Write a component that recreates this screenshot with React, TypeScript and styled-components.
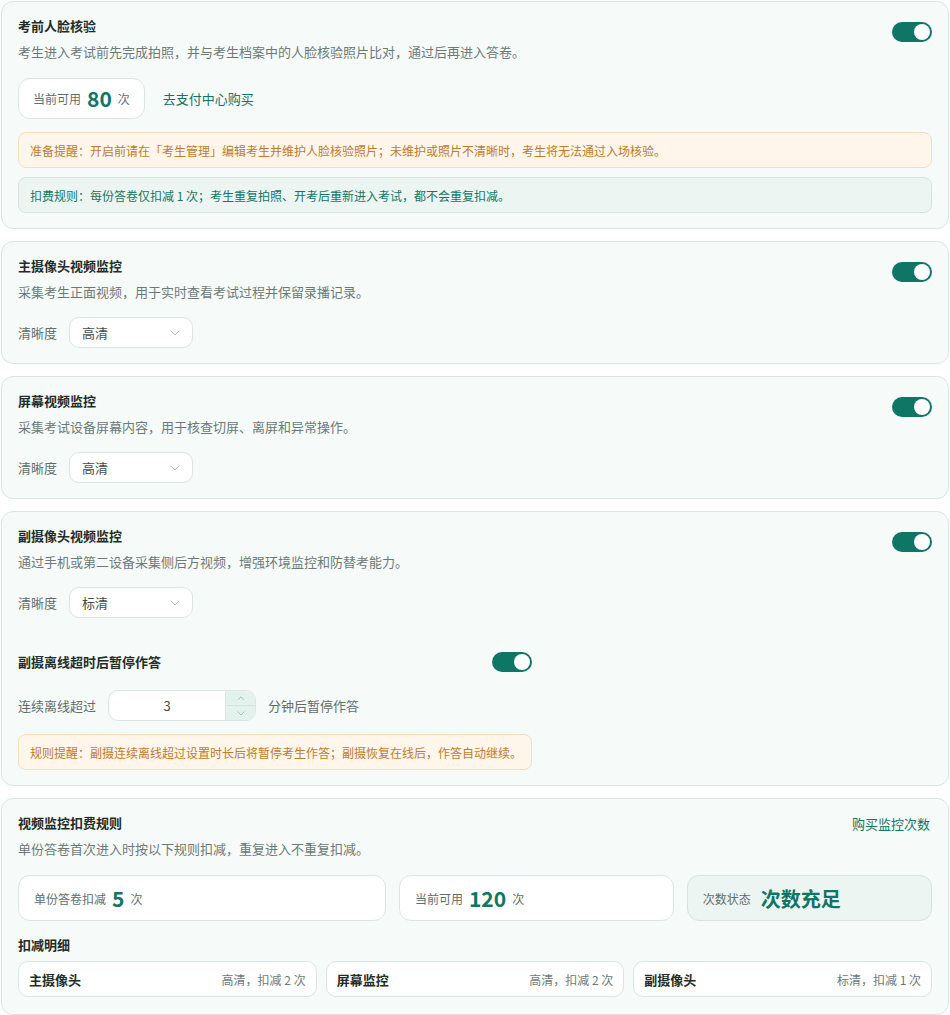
import React from "react"
import styled, { createGlobalStyle } from "styled-components"

const teal = "#0f7564"

const GlobalStyle = createGlobalStyle`
  body {
    margin: 0;
    background: #ffffff;
    font-family: "Noto Sans CJK SC", "Noto Sans", "Liberation Sans", sans-serif;
    color: #1f2d2a;
  }
  * { box-sizing: border-box; }
`

const Page = styled.div`
  display: flex;
  flex-direction: column;
  gap: 12px;
  padding: 1px 1px 0;
`

const Card = styled.section<{ $pb?: number }>`
  background: #f6faf9;
  border: 1px solid #d9e6e2;
  border-radius: 12px;
  padding: 14px 16px ${p => p.$pb ?? 15}px;
`

const Header = styled.div`
  display: flex;
  justify-content: space-between;
  align-items: flex-start;
`

const Title = styled.h3`
  margin: 0;
  font-size: 13px;
  line-height: 20px;
  font-weight: 700;
  color: #1f2d2a;
`

const Desc = styled.p`
  margin: 6px 0 0;
  font-size: 13px;
  line-height: 20px;
  color: #6b7a77;
`

const Toggle = styled.span<{ $offset?: number }>`
  display: inline-block;
  position: relative;
  width: 40px;
  height: 20px;
  border-radius: 10px;
  background: ${teal};
  margin-top: ${p => p.$offset ?? 6}px;
  flex-shrink: 0;
  &::after {
    content: "";
    position: absolute;
    top: 2px;
    right: 2px;
    width: 16px;
    height: 16px;
    border-radius: 50%;
    background: #ffffff;
  }
`

const Row = styled.div<{ $mt?: number; $gap?: number }>`
  display: flex;
  align-items: center;
  gap: ${p => p.$gap ?? 12}px;
  margin-top: ${p => p.$mt ?? 0}px;
`

const QuotaBox = styled.div`
  display: flex;
  align-items: center;
  gap: 6px;
  height: 41px;
  padding: 0 14px;
  background: #ffffff;
  border: 1px solid #d9e6e2;
  border-radius: 12px;
`

const SmallLabel = styled.span`
  font-size: 12px;
  color: #5f6e6b;
`

const BigNum = styled.span`
  font-size: 21px;
  font-weight: 700;
  color: ${teal};
  line-height: 1;
`

const LinkText = styled.a<{ $mr?: number }>`
  font-size: 13px;
  color: ${teal};
  text-decoration: none;
  cursor: pointer;
  margin-right: ${p => p.$mr ?? 0}px;
`

const Notice = styled.div<{ $tone: "warn" | "info"; $mt?: number }>`
  display: flex;
  align-items: center;
  height: 36px;
  padding: 0 11px;
  margin-top: ${p => p.$mt ?? 9}px;
  font-size: 12px;
  white-space: nowrap;
  border-radius: 8px;
  background: ${p => (p.$tone === "warn" ? "#fff6eb" : "#edf5f2")};
  border: 1px solid ${p => (p.$tone === "warn" ? "#f7ddbb" : "#d4e5df")};
  color: ${p => (p.$tone === "warn" ? "#c27a2b" : "#137564")};
`

const FieldLabel = styled.span`
  font-size: 13px;
  color: #5f6e6b;
`

const SelectBox = styled.div`
  display: flex;
  align-items: center;
  justify-content: space-between;
  width: 124px;
  height: 31px;
  padding: 0 12px;
  background: #ffffff;
  border: 1px solid #d9e6e2;
  border-radius: 10px;
  font-size: 13px;
  color: #3f4d4a;
`

const SubSection = styled.div`
  max-width: 514px;
  margin-top: 34px;
`

const SubRow = styled.div`
  display: flex;
  justify-content: space-between;
  align-items: center;
`

const NumberInput = styled.div`
  display: flex;
  width: 148px;
  height: 31px;
  background: #ffffff;
  border: 1px solid #d9e6e2;
  border-radius: 10px;
  overflow: hidden;
`

const NumberValue = styled.span`
  flex: 1;
  display: flex;
  align-items: center;
  justify-content: center;
  font-size: 13px;
  color: #3f4d4a;
`

const Stepper = styled.div`
  width: 30px;
  display: flex;
  flex-direction: column;
  border-left: 1px solid #d9e6e2;
  background: #e4f2ed;
`

const StepBtn = styled.span<{ $top?: boolean }>`
  flex: 1;
  display: flex;
  align-items: center;
  justify-content: center;
  border-bottom: ${p => (p.$top ? "1px solid #d4e5df" : "none")};
`

const TitleBar = styled.div`
  display: flex;
  justify-content: space-between;
  align-items: center;
`

const StatsGrid = styled.div`
  display: grid;
  grid-template-columns: 1.5fr 1.12fr 1fr;
  gap: 13px;
  margin-top: 16px;
`

const StatBox = styled.div<{ $accent?: boolean }>`
  display: flex;
  align-items: center;
  gap: 6px;
  height: 46px;
  padding: 0 15px;
  border-radius: 12px;
  background: ${p => (p.$accent ? "#edf5f2" : "#ffffff")};
  border: 1px solid ${p => (p.$accent ? "#d4e5df" : "#d9e6e2")};
`

const StatusText = styled.span`
  font-size: 20px;
  font-weight: 700;
  color: ${teal};
  margin-left: 4px;
`

const SectionLabel = styled.div`
  margin-top: 14px;
  font-size: 13px;
  line-height: 20px;
  font-weight: 700;
`

const DetailGrid = styled.div`
  display: grid;
  grid-template-columns: repeat(3, 1fr);
  gap: 9px;
  margin-top: 6px;
`

const DetailBox = styled.div`
  display: flex;
  justify-content: space-between;
  align-items: center;
  height: 36px;
  padding: 0 10px;
  background: #ffffff;
  border: 1px solid #d9e6e2;
  border-radius: 10px;
`

const DetailName = styled.span`
  font-size: 13px;
  font-weight: 700;
  color: #1f2d2a;
`

const DetailMeta = styled.span`
  font-size: 12px;
  color: #6b7a77;
`

const Chevron = ({ up = false, size = 10, color = "#b9c5c2" }: { up?: boolean; size?: number; color?: string }) => (
  <svg width={size} height={size * 0.6} viewBox="0 0 10 6" fill="none">
    <path d={up ? "M1 5L5 1L9 5" : "M1 1L5 5L9 1"} stroke={color} strokeWidth="1" strokeLinecap="round" strokeLinejoin="round" />
  </svg>
)

const Select = ({ value }: { value: string }) => (
  <Row $mt={15}>
    <FieldLabel>清晰度</FieldLabel>
    <SelectBox>
      <span>{value}</span>
      <Chevron />
    </SelectBox>
  </Row>
)

const MonitorCard = (props: { title: string; desc: string; value: string; children?: React.ReactNode }) => (
  <Card>
    <Header>
      <div>
        <Title>{props.title}</Title>
        <Desc>{props.desc}</Desc>
      </div>
      <Toggle />
    </Header>
    <Select value={props.value} />
    {props.children}
  </Card>
)

const details = [
  { name: "主摄像头", meta: "高清，扣减 2 次" },
  { name: "屏幕监控", meta: "高清，扣减 2 次" },
  { name: "副摄像头", meta: "标清，扣减 1 次" },
]

export default function App() {
  return (
    <>
      <GlobalStyle />
      <Page>
        <Card>
          <Header>
            <div>
              <Title>考前人脸核验</Title>
              <Desc>考生进入考试前先完成拍照，并与考生档案中的人脸核验照片比对，通过后再进入答卷。</Desc>
            </div>
            <Toggle />
          </Header>
          <Row $mt={16} $gap={18}>
            <QuotaBox>
              <SmallLabel>当前可用</SmallLabel>
              <BigNum>80</BigNum>
              <SmallLabel>次</SmallLabel>
            </QuotaBox>
            <LinkText>去支付中心购买</LinkText>
          </Row>
          <Notice $tone="warn" $mt={13}>
            准备提醒：开启前请在「考生管理」编辑考生并维护人脸核验照片；未维护或照片不清晰时，考生将无法通过入场核验。
          </Notice>
          <Notice $tone="info">
            扣费规则：每份答卷仅扣减 1 次；考生重复拍照、开考后重新进入考试，都不会重复扣减。
          </Notice>
        </Card>

        <MonitorCard title="主摄像头视频监控" desc="采集考生正面视频，用于实时查看考试过程并保留录播记录。" value="高清" />
        <MonitorCard title="屏幕视频监控" desc="采集考试设备屏幕内容，用于核查切屏、离屏和异常操作。" value="高清" />
        <MonitorCard title="副摄像头视频监控" desc="通过手机或第二设备采集侧后方视频，增强环境监控和防替考能力。" value="标清">
          <SubSection>
            <SubRow>
              <Title>副摄离线超时后暂停作答</Title>
              <Toggle $offset={0} />
            </SubRow>
            <Row $mt={18} $gap={12}>
              <FieldLabel>连续离线超过</FieldLabel>
              <NumberInput>
                <NumberValue>3</NumberValue>
                <Stepper>
                  <StepBtn $top>
                    <Chevron up size={8} color="#9fb0ac" />
                  </StepBtn>
                  <StepBtn>
                    <Chevron size={8} color="#9fb0ac" />
                  </StepBtn>
                </Stepper>
              </NumberInput>
              <FieldLabel>分钟后暂停作答</FieldLabel>
            </Row>
            <Notice $tone="warn" $mt={13}>
              规则提醒：副摄连续离线超过设置时长后将暂停考生作答；副摄恢复在线后，作答自动继续。
            </Notice>
          </SubSection>
        </MonitorCard>

        <Card $pb={17}>
          <TitleBar>
            <Title>视频监控扣费规则</Title>
            <LinkText $mr={2}>购买监控次数</LinkText>
          </TitleBar>
          <Desc>单份答卷首次进入时按以下规则扣减，重复进入不重复扣减。</Desc>
          <StatsGrid>
            <StatBox>
              <SmallLabel>单份答卷扣减</SmallLabel>
              <BigNum>5</BigNum>
              <SmallLabel>次</SmallLabel>
            </StatBox>
            <StatBox>
              <SmallLabel>当前可用</SmallLabel>
              <BigNum>120</BigNum>
              <SmallLabel>次</SmallLabel>
            </StatBox>
            <StatBox $accent>
              <SmallLabel>次数状态</SmallLabel>
              <StatusText>次数充足</StatusText>
            </StatBox>
          </StatsGrid>
          <SectionLabel>扣减明细</SectionLabel>
          <DetailGrid>
            {details.map(d => (
              <DetailBox key={d.name}>
                <DetailName>{d.name}</DetailName>
                <DetailMeta>{d.meta}</DetailMeta>
              </DetailBox>
            ))}
          </DetailGrid>
        </Card>
      </Page>
    </>
  )
}
